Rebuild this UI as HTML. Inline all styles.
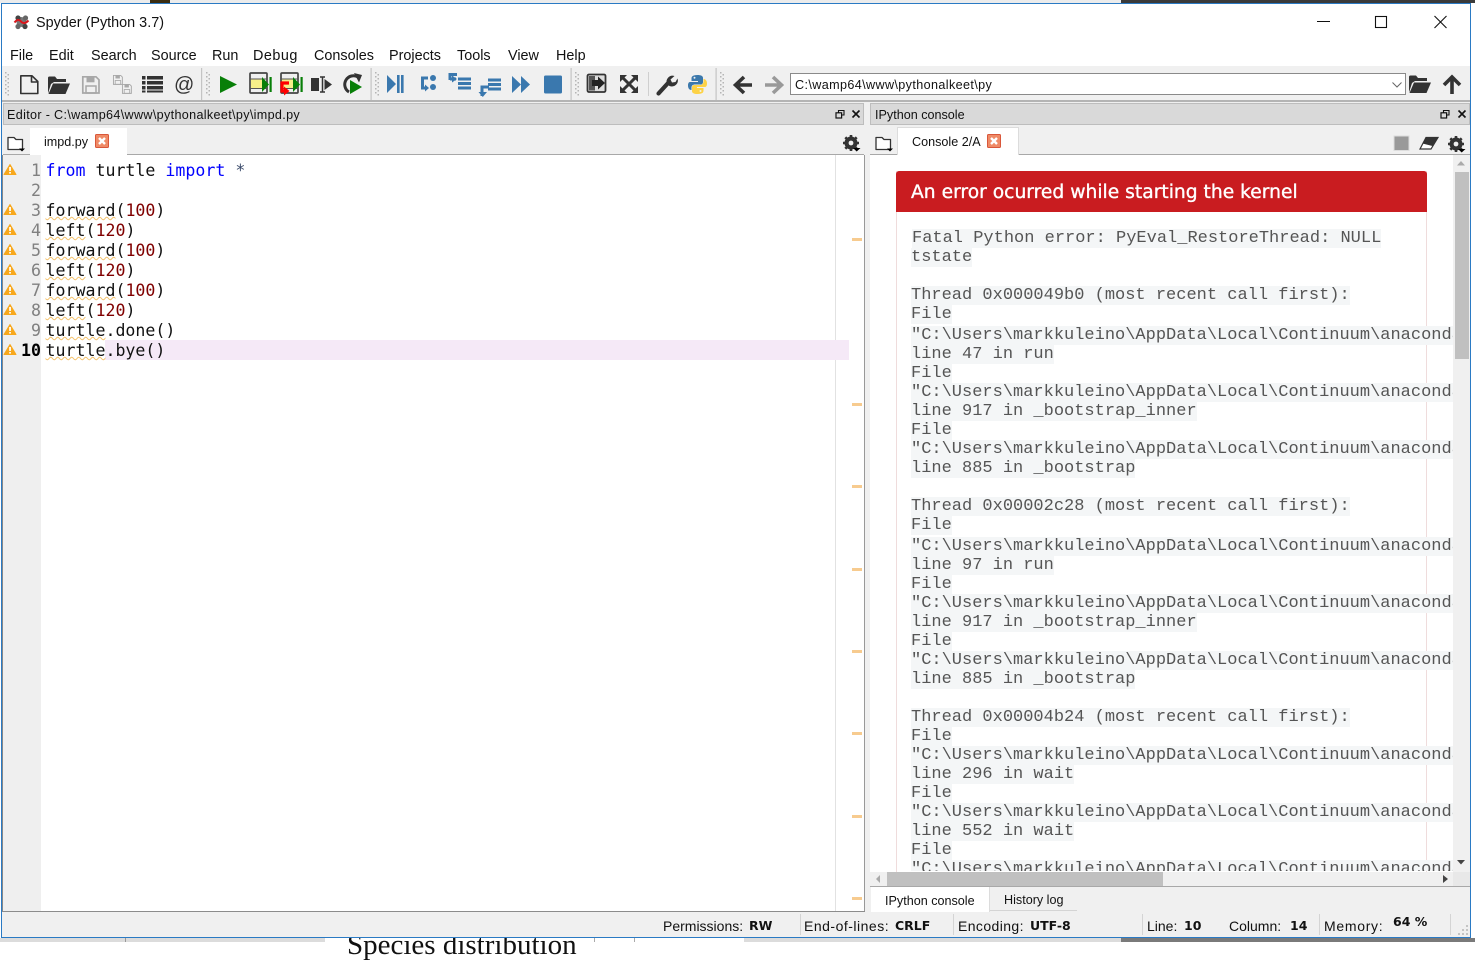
<!DOCTYPE html>
<html><head><meta charset="utf-8"><title>Spyder (Python 3.7)</title>
<style>
html,body{margin:0;padding:0;background:#fff}
body{width:1475px;height:942px;overflow:hidden;position:relative;font-family:"Liberation Sans",sans-serif;color:#111}
.a{position:absolute}
.t{position:absolute;white-space:pre;line-height:20px;font-size:14px}
.m{font-size:14.4px;top:46px}
.b{font-family:"DejaVu Sans",sans-serif;font-weight:bold;font-size:12.5px}
.code{position:absolute;left:45.5px;font:16.6px/20px "DejaVu Sans Mono",monospace;white-space:pre;color:#111}
.k{color:#0000ff}.n{color:#800000}
.w{text-decoration:underline wavy #f5c26b 1px;text-underline-offset:0px}
.ln{position:absolute;left:3px;width:38px;text-align:right;font:16.6px/20px "DejaVu Sans Mono",monospace;color:#808080}
.c{position:absolute;left:0;font:17px/20px "Liberation Mono",monospace;white-space:pre;color:#555}
.c span{background:#f4f6f7}
</style></head><body>

<!-- desktop behind -->
<div class="a" style="left:0;top:0;width:1475px;height:3px;background:#ececec"></div>
<div class="a" style="left:1121px;top:0;width:354px;height:3px;background:#3a3a3a"></div>
<div class="a" style="left:150px;top:0;width:20px;height:3px;background:#3a2c10"></div>
<div class="a" style="left:0;top:938px;width:1121px;height:4px;background:#dcdcdc"></div>
<div class="a" style="left:325px;top:938px;width:419px;height:4px;background:#fff"></div>
<div class="a" style="left:1121px;top:938px;width:354px;height:4px;background:#7a7a7a"></div>
<div class="t" style="left:347px;top:930px;font:29px/30px 'Liberation Serif',serif;color:#111">Species distribution</div>
<div class="a" style="left:594px;top:937px;width:41px;height:5px;border-left:1px solid #aaa;border-right:1px solid #aaa;box-sizing:border-box"></div>
<div class="a" style="left:125px;top:938px;width:1px;height:4px;background:#999"></div>

<!-- window -->
<div class="a" style="left:1px;top:3px;width:1470px;height:935px;background:#f0f0f0;border:1px solid #2a7ac4;box-sizing:border-box;overflow:hidden"></div>
<div class="a" style="left:2px;top:4px;width:1468px;height:62px;background:#fff"></div>

<div class="t" style="left:36px;top:13px;font-size:14.4px">Spyder (Python 3.7)</div>
<div class="t m" style="left:10px">File</div>
<div class="t m" style="left:49px">Edit</div>
<div class="t m" style="left:91px">Search</div>
<div class="t m" style="left:151px">Source</div>
<div class="t m" style="left:212px">Run</div>
<div class="t m" style="left:253px;letter-spacing:.5px">Debug</div>
<div class="t m" style="left:314px">Consoles</div>
<div class="t m" style="left:389px">Projects</div>
<div class="t m" style="left:457px">Tools</div>
<div class="t m" style="left:508px">View</div>
<div class="t m" style="left:556px">Help</div>

<!-- toolbar base -->
<div class="a" style="left:2px;top:100px;width:1468px;height:2px;background:#b4b4b4"></div>
<div class="a" style="left:790px;top:73px;width:616px;height:22px;background:#fff;border:1px solid #8a8a8a;box-sizing:border-box"></div>
<div class="t" style="left:795px;top:75px;font-size:12.6px;letter-spacing:.38px">C:\wamp64\www\pythonalkeet\py</div>

<!-- editor pane -->
<div class="a" style="left:3px;top:103px;width:861px;height:22px;background:#d9d9d9;border:1px solid #bdbdbd;box-sizing:border-box"></div>
<div class="t" style="left:7px;top:105px;font-size:12.6px;letter-spacing:.33px">Editor - C:\wamp64\www\pythonalkeet\py\impd.py</div>
<div class="a" style="left:3px;top:154px;width:861px;height:1px;background:#a8a8a8"></div>
<div class="a" style="left:30px;top:128px;width:97px;height:27px;background:#fff"></div>
<div class="t" style="left:44px;top:132px;font-size:12.6px">impd.py</div>

<div class="a" style="left:2px;top:155px;width:862px;height:756px;background:#fff;border-left:1px solid #888;box-sizing:border-box"></div>
<div class="a" style="left:3px;top:155px;width:38px;height:756px;background:#efefef"></div>
<div class="a" style="left:835px;top:155px;width:1px;height:756px;background:#e2e2e2"></div>
<div class="a" style="left:864px;top:155px;width:1px;height:756px;background:#999"></div>
<div class="a" style="left:105px;top:340px;width:744px;height:20px;background:#f5e9f7"></div>
<div class="a" style="left:2px;top:911px;width:863px;height:1px;background:#8c8c8c"></div>

<div class="ln" style="top:161px">1</div>
<div class="ln" style="top:181px">2</div>
<div class="ln" style="top:201px">3</div>
<div class="ln" style="top:221px">4</div>
<div class="ln" style="top:241px">5</div>
<div class="ln" style="top:261px">6</div>
<div class="ln" style="top:281px">7</div>
<div class="ln" style="top:301px">8</div>
<div class="ln" style="top:321px">9</div>
<div class="ln" style="top:341px;color:#000;font-weight:bold">10</div>

<div class="code" style="top:161px"><span class="k">from</span> turtle <span class="k">import</span> <span style="color:#3a4a6a">*</span></div>
<div class="code" style="top:201px"><span class="w">forward</span>(<span class="n">100</span>)</div>
<div class="code" style="top:221px"><span class="w">left</span>(<span class="n">120</span>)</div>
<div class="code" style="top:241px"><span class="w">forward</span>(<span class="n">100</span>)</div>
<div class="code" style="top:261px"><span class="w">left</span>(<span class="n">120</span>)</div>
<div class="code" style="top:281px"><span class="w">forward</span>(<span class="n">100</span>)</div>
<div class="code" style="top:301px"><span class="w">left</span>(<span class="n">120</span>)</div>
<div class="code" style="top:321px"><span class="w">turtle</span>.done()</div>
<div class="code" style="top:341px"><span class="w">turtle</span>.bye()</div>

<!-- console pane -->
<div class="a" style="left:870px;top:103px;width:600px;height:22px;background:#d9d9d9;border:1px solid #bdbdbd;box-sizing:border-box"></div>
<div class="t" style="left:875px;top:105px;font-size:12.6px">IPython console</div>
<div class="a" style="left:870px;top:154px;width:600px;height:1px;background:#a8a8a8"></div>
<div class="a" style="left:897px;top:127px;width:122px;height:28px;background:#fff;border:1px solid #dcdcdc;border-bottom:0;box-sizing:border-box"></div>
<div class="t" style="left:912px;top:132px;font-size:12.6px">Console 2/A</div>

<div class="a" style="left:870px;top:155px;width:600px;height:717px;background:#fff;overflow:hidden">
  <div class="a" style="left:26px;top:16px;width:531px;height:720px;border-left:1px solid #efdcdc;border-right:1px solid #efdcdc;box-sizing:border-box"></div>
  <div class="a" style="left:26px;top:16px;width:531px;height:41px;background:#c91c20;border-radius:3px 3px 0 0"></div>
  <div class="t" style="left:41px;top:27px;font:18.7px/22px 'DejaVu Sans',sans-serif;color:#fff;-webkit-text-stroke:.35px #fff">An error ocurred while starting the kernel</div>
  <div class="a" style="left:41px;top:2px;width:542px;height:714px;overflow:hidden">
    <div class="c" style="top:72px;left:1px"><span>Fatal Python error: PyEval_RestoreThread: NULL</span></div>
    <div class="c" style="top:91px"><span>tstate</span></div>
    <div class="c" style="top:129px"><span>Thread 0x000049b0 (most recent call first):</span></div>
    <div class="c" style="top:148px"><span>File</span></div>
    <div class="c" style="top:169px"><span>"C:\Users\markkuleino\AppData\Local\Continuum\anaconda3\lib</span></div>
    <div class="c" style="top:188px"><span>line 47 in run</span></div>
    <div class="c" style="top:207px"><span>File</span></div>
    <div class="c" style="top:226px"><span>"C:\Users\markkuleino\AppData\Local\Continuum\anaconda3\lib</span></div>
    <div class="c" style="top:245px"><span>line 917 in _bootstrap_inner</span></div>
    <div class="c" style="top:264px"><span>File</span></div>
    <div class="c" style="top:283px"><span>"C:\Users\markkuleino\AppData\Local\Continuum\anaconda3\lib</span></div>
    <div class="c" style="top:302px"><span>line 885 in _bootstrap</span></div>
    <div class="c" style="top:340px"><span>Thread 0x00002c28 (most recent call first):</span></div>
    <div class="c" style="top:359px"><span>File</span></div>
    <div class="c" style="top:380px"><span>"C:\Users\markkuleino\AppData\Local\Continuum\anaconda3\lib</span></div>
    <div class="c" style="top:399px"><span>line 97 in run</span></div>
    <div class="c" style="top:418px"><span>File</span></div>
    <div class="c" style="top:437px"><span>"C:\Users\markkuleino\AppData\Local\Continuum\anaconda3\lib</span></div>
    <div class="c" style="top:456px"><span>line 917 in _bootstrap_inner</span></div>
    <div class="c" style="top:475px"><span>File</span></div>
    <div class="c" style="top:494px"><span>"C:\Users\markkuleino\AppData\Local\Continuum\anaconda3\lib</span></div>
    <div class="c" style="top:513px"><span>line 885 in _bootstrap</span></div>
    <div class="c" style="top:551px"><span>Thread 0x00004b24 (most recent call first):</span></div>
    <div class="c" style="top:570px"><span>File</span></div>
    <div class="c" style="top:589px"><span>"C:\Users\markkuleino\AppData\Local\Continuum\anaconda3\lib</span></div>
    <div class="c" style="top:608px"><span>line 296 in wait</span></div>
    <div class="c" style="top:627px"><span>File</span></div>
    <div class="c" style="top:646px"><span>"C:\Users\markkuleino\AppData\Local\Continuum\anaconda3\lib</span></div>
    <div class="c" style="top:665px"><span>line 552 in wait</span></div>
    <div class="c" style="top:684px"><span>File</span></div>
    <div class="c" style="top:703px"><span>"C:\Users\markkuleino\AppData\Local\Continuum\anaconda3\lib</span></div>
  </div>
</div>

<!-- scrollbars -->
<div class="a" style="left:1453px;top:155px;width:17px;height:717px;background:#f0f0f0"></div>
<div class="a" style="left:1455px;top:172px;width:14px;height:187px;background:#c0c0c0"></div>
<div class="a" style="left:870px;top:872px;width:600px;height:15px;background:#f0f0f0"></div>
<div class="a" style="left:887px;top:872px;width:276px;height:14px;background:#c0c0c0"></div>
<div class="a" style="left:1453px;top:872px;width:17px;height:15px;background:#e8e8e8"></div>
<div class="a" style="left:870px;top:886px;width:600px;height:1px;background:#a8a8a8"></div>

<!-- bottom tabs -->
<div class="a" style="left:871px;top:887px;width:119px;height:25px;background:#fff;border-right:1px solid #dcdcdc;box-sizing:border-box"></div>
<div class="a" style="left:990px;top:910px;width:87px;height:1px;background:#d4d4d4"></div>
<div class="t" style="left:885px;top:891px;font-size:12.6px">IPython console</div>
<div class="t" style="left:1004px;top:890px;font-size:12.6px">History log</div>

<!-- status -->
<div class="t" style="left:663px;top:916px">Permissions:</div><div class="t b" style="left:749px;top:916px">RW</div>
<div class="t" style="left:804px;top:916px;letter-spacing:.5px">End-of-lines:</div><div class="t b" style="left:895px;top:916px">CRLF</div>
<div class="t" style="left:958px;top:916px;letter-spacing:.4px">Encoding:</div><div class="t b" style="left:1030px;top:916px">UTF-8</div>
<div class="t" style="left:1147px;top:916px">Line:</div><div class="t b" style="left:1184px;top:916px">10</div>
<div class="t" style="left:1229px;top:916px">Column:</div><div class="t b" style="left:1290px;top:916px">14</div>
<div class="t" style="left:1324px;top:916px;letter-spacing:.7px">Memory:</div><div class="t b" style="left:1393px;top:912px">64 %</div>

<!-- all icons -->
<svg class="a" style="left:0;top:0" width="1475" height="942" viewBox="0 0 1475 942">
<defs>
  <g id="warn"><path d="M6 0.5 L12 10.5 H0 Z" fill="#f8a81c" stroke="#f8a81c" stroke-linejoin="round"/><rect x="5.2" y="3" width="1.7" height="4" fill="#fff"/><rect x="5.2" y="8" width="1.7" height="1.6" fill="#fff"/></g>
  <g id="close"><rect x=".5" y=".5" width="13" height="13" rx="1" fill="#ef8a66" stroke="#d9573a"/><path d="M4 4 L10 10 M10 4 L4 10" stroke="#fff" stroke-width="2.4"/></g>
  <g id="tabs"><path d="M1 2.5 H7 L9 4.5 H15.5 V14.5 H1 Z" fill="#fff" stroke="#333" stroke-width="1.3" stroke-linejoin="round"/><path d="M12 13.5 H18 L15 16.5 Z" fill="#000"/></g>
  <g id="gear"><circle cx="8" cy="8" r="5" fill="none" stroke="#333" stroke-width="3"/><path d="M8 0 V16 M0 8 H16 M2.3 2.3 L13.7 13.7 M13.7 2.3 L2.3 13.7" stroke="#333" stroke-width="2.6"/><circle cx="8" cy="8" r="2.4" fill="#f0f0f0"/><path d="M10 13 H17.5 L13.7 16.5 Z" fill="#000"/></g>
  <g id="float"><path d="M3 2.5 V0.5 H8.5 V5 H6.5" fill="none" stroke="#111" stroke-width="1.1"/><rect x=".5" y="2.8" width="5.6" height="5.2" fill="none" stroke="#111" stroke-width="1.2"/></g>
  <g id="x"><path d="M0.5 0.5 L7.5 7.5 M7.5 0.5 L0.5 7.5" stroke="#111" stroke-width="1.6"/></g>
  <g id="folder"><path d="M0 17.5 V2 Q0 .5 1.5 .5 H7 L9 3 H18 V6 H6 L3 8 Z" fill="#333"/><path d="M0.5 18 L5 7.5 H22 L17.5 18 Z" fill="#333"/></g>
  <g id="grip" fill="#b5b5b5"><rect x="0" y="0" width="1.5" height="1.5"/><rect x="0" y="4" width="1.5" height="1.5"/><rect x="0" y="8" width="1.5" height="1.5"/><rect x="0" y="12" width="1.5" height="1.5"/><rect x="0" y="16" width="1.5" height="1.5"/><rect x="0" y="20" width="1.5" height="1.5"/><rect x="2.5" y="2" width="1.5" height="1.5"/><rect x="2.5" y="6" width="1.5" height="1.5"/><rect x="2.5" y="10" width="1.5" height="1.5"/><rect x="2.5" y="14" width="1.5" height="1.5"/><rect x="2.5" y="18" width="1.5" height="1.5"/><rect x="2.5" y="22" width="1.5" height="1.5"/></g>
  <g id="disk"><path d="M.8 .8 H14 L17 3.8 V17 H.8 Z" fill="none" stroke="#a8a8a8" stroke-width="1.7"/><rect x="4.5" y=".8" width="8" height="5.5" fill="#a8a8a8"/><rect x="4" y="10" width="10" height="7" fill="none" stroke="#a8a8a8" stroke-width="1.5"/></g>
</defs>

<!-- title logo -->
<circle cx="21.5" cy="22" r="5" fill="#777"/>
<circle cx="18" cy="18" r="2.6" fill="#444"/><circle cx="25.5" cy="18" r="2.6" fill="#666"/><circle cx="18" cy="26.5" r="2.6" fill="#666"/><circle cx="25" cy="26.5" r="2.6" fill="#444"/>
<path d="M14.5 22.5 Q18 18 21 21.5 T28.5 20.5" fill="none" stroke="#d8151b" stroke-width="2"/>

<!-- window controls -->
<rect x="1317" y="21" width="13" height="1" fill="#111"/>
<rect x="1375.5" y="16.5" width="11" height="11" fill="none" stroke="#111" stroke-width="1.1"/>
<path d="M1434.5 16 L1446.5 28 M1446.5 16 L1434.5 28" stroke="#111" stroke-width="1.1"/>

<!-- toolbar separators + grips -->
<rect x="201" y="68" width="1.2" height="32" fill="#c4c4c4"/><rect x="370.5" y="68" width="1.2" height="32" fill="#c4c4c4"/><rect x="570.5" y="68" width="1.2" height="32" fill="#c4c4c4"/><rect x="648" y="72" width="1" height="24" fill="#cfcfcf"/><rect x="715.5" y="68" width="1.2" height="32" fill="#c4c4c4"/>
<use href="#grip" x="5" y="72"/><use href="#grip" x="206" y="72"/><use href="#grip" x="375" y="72"/><use href="#grip" x="575" y="72"/><use href="#grip" x="720" y="72"/>

<!-- file group -->
<path d="M20.8 75.8 H32 L37.8 81.5 V93.5 H20.8 Z M31.5 76 V82 H37.5" fill="none" stroke="#333" stroke-width="1.6" stroke-linejoin="round"/>
<use href="#folder" x="48" y="76"/>
<use href="#disk" x="82" y="76"/>
<g transform="translate(113 75) scale(.55)"><use href="#disk"/></g>
<g transform="translate(122 84) scale(.55)"><use href="#disk"/></g>
<g fill="#333"><rect x="142" y="76" width="3.5" height="3.5"/><rect x="147" y="76" width="16" height="3.5"/><rect x="142" y="81" width="3.5" height="3.5"/><rect x="147" y="81" width="16" height="3.5"/><rect x="142" y="86" width="3.5" height="3.5"/><rect x="147" y="86" width="16" height="3.5"/><rect x="142" y="90.5" width="3.5" height="2"/><rect x="147" y="90.5" width="16" height="2"/></g>
<text x="174" y="91" font-family="Liberation Sans, sans-serif" font-size="20" fill="#333">@</text>

<!-- run group -->
<path d="M220 76 L237 84.5 L220 93 Z" fill="#087f08"/>
<rect x="250" y="73" width="17" height="20" rx="1" fill="none" stroke="#444" stroke-width="1.7"/>
<rect x="251" y="79.5" width="13" height="9" fill="#f7ef8a"/><path d="M250 79 H267 M250 88.5 H267" stroke="#555"/>
<path d="M262 77 L269 84.5 L262 92 Z" fill="#087f08"/><rect x="269.5" y="77" width="2.2" height="15" fill="#087f08"/>
<rect x="281" y="73" width="17" height="20" rx="1" fill="none" stroke="#444" stroke-width="1.7"/>
<rect x="282" y="79.5" width="13" height="9" fill="#f7ef8a"/><path d="M281 79 H298 M281 88.5 H298" stroke="#555"/>
<path d="M293 77 L300 84.5 L293 92 Z" fill="#087f08"/><rect x="300.5" y="77" width="2.2" height="15" fill="#087f08"/>
<path d="M289 83 H282 V91 H285" fill="none" stroke="#f00" stroke-width="3.2"/><path d="M284 86.5 L289.5 91 L284 95.5 Z" fill="#f00"/>
<rect x="311" y="78" width="8" height="13" fill="#333"/><path d="M320 77 H325 M322.5 77 V92 M320 92 H325" stroke="#333" stroke-width="1.5" fill="none"/><path d="M324.5 79 L332 84.5 L324.5 90 Z" fill="#333"/>
<path d="M349 92 A8 8 0 1 1 358 77" fill="none" stroke="#333" stroke-width="3"/><path d="M354 73 L362 75 L359 82.5 Z" fill="#333"/><path d="M350 80 L362 87 L350 94 Z" fill="#087f08"/>

<!-- debug group -->
<path d="M387 75 L396 84 L387 93 Z" fill="#3a78ae"/><rect x="397" y="75" width="2.6" height="18" fill="#3a78ae"/><rect x="401" y="75" width="2.6" height="18" fill="#3a78ae"/>
<g fill="none" stroke="#3a78ae" stroke-width="3"><path d="M428 78 H422.5 V88 H426"/><path d="M450 80 V74.5 H457 M450 79 H456"/><path d="M458 79 H471 M458 83.5 H471 M458 88 H471"/><path d="M482 96 V87 H489"/><path d="M488 80 H501 M488 84.5 H501 M488 89 H501"/></g>
<g fill="#3a78ae"><circle cx="433" cy="78" r="3"/><circle cx="433" cy="87" r="3"/><path d="M425 84.5 L429 88 L425 91.5 Z"/><path d="M452 75.5 L457 79 L452 82.5 Z"/><path d="M478.5 92 H487 L482.8 97 Z"/><path d="M512 76 L521 84.5 L512 93 Z"/><path d="M521 76 L530 84.5 L521 93 Z"/><rect x="544" y="75.5" width="18" height="18" rx="1.5"/></g>

<!-- misc group -->
<rect x="587.5" y="74.5" width="18" height="17.5" rx="1.5" fill="#ddd" stroke="#333" stroke-width="1.8"/><rect x="589" y="76" width="6" height="14.5" fill="#555"/>
<path d="M592 80 H598 V76.5 L605 83 L598 89.5 V86 H592 Z" fill="#222"/>
<g fill="none" stroke="#333" stroke-width="3"><path d="M622 77 L636 91 M636 77 L622 91"/></g>
<g fill="#333"><path d="M620 75 H627 L620 82 Z"/><path d="M638 75 H631 L638 82 Z"/><path d="M620 93 H627 L620 86 Z"/><path d="M638 93 H631 L638 86 Z"/></g>
<path d="M658.5 93.5 L669 82" stroke="#333" stroke-width="4.2" stroke-linecap="round"/>
<path d="M667 84 A6 6 0 0 1 674.5 76 L670.5 79.5 L672 82.5 L675.5 82 L677.5 78.5 A6 6 0 0 1 669.5 86 Z" fill="#333"/>
<path d="M697.5 75 C692 75 691.5 77 691.5 78.5 V81 H698 V82 H690 C688 82 688 85 688 85.5 C688 89 690 90 691.5 90 V87.5 C691.5 85.5 693 84.5 695 84.5 H700.5 C702 84.5 703 83.5 703 82 V78 C703 76 701 75 697.5 75 Z" fill="#3b78ab"/>
<circle cx="694.5" cy="77.8" r="1" fill="#f0f0f0"/>
<path d="M697.5 94 C703 94 703.5 92 703.5 90.5 V88 H697 V87 H705 C707 87 707 84 707 83.5 C707 80 705 79 703.5 79 V81.5 C703.5 83.5 702 85 700 85 H694.5 C693 85 692 86 692 87.5 V91 C692 93 694 94 697.5 94 Z" fill="#fdd245"/>
<circle cx="700.5" cy="91" r="1" fill="#f0f0f0"/>

<!-- nav -->
<path d="M744 77 L735.5 85 L744 93 M736.5 85 H752" fill="none" stroke="#333" stroke-width="3.6"/>
<path d="M773 77 L781.5 85 L773 93 M780.5 85 H765" fill="none" stroke="#999" stroke-width="3.6"/>
<path d="M1392.5 82.5 L1397 87 L1401.5 82.5" fill="none" stroke="#666" stroke-width="1"/>
<use href="#folder" x="1409" y="75"/>
<path d="M1444 85 L1452 77 L1460 85 M1452 78 V94" fill="none" stroke="#333" stroke-width="3.6"/>

<!-- dock controls -->
<use href="#float" x="835.5" y="110"/><use href="#x" x="852" y="110"/>
<use href="#float" x="1440.5" y="110"/><use href="#x" x="1458" y="110"/>

<!-- tab row icons -->
<use href="#tabs" x="7" y="135"/><use href="#close" x="95" y="134"/><use href="#gear" x="843" y="135"/>
<use href="#tabs" x="875" y="135"/><use href="#close" x="987" y="134"/>
<rect x="1394" y="136" width="15" height="14.5" fill="#999" stroke="#ddd"/>
<path d="M1426 137.5 H1438 L1431 149 H1420 Z" fill="#fff" stroke="#333" stroke-width="1.2"/><path d="M1426 137.5 H1438 L1432.5 146 L1422.5 143.5 Z" fill="#333"/>
<use href="#gear" x="1448" y="136"/>

<!-- warnings -->
<use href="#warn" x="4" y="164"/><use href="#warn" x="4" y="204"/><use href="#warn" x="4" y="224"/><use href="#warn" x="4" y="244"/><use href="#warn" x="4" y="264"/><use href="#warn" x="4" y="284"/><use href="#warn" x="4" y="304"/><use href="#warn" x="4" y="324"/><use href="#warn" x="4" y="344"/>

<!-- flags -->
<g fill="#f7cb8f"><rect x="852" y="238" width="10" height="3"/><rect x="852" y="403" width="10" height="3"/><rect x="852" y="485" width="10" height="3"/><rect x="852" y="568" width="10" height="3"/><rect x="852" y="650" width="10" height="3"/><rect x="852" y="732" width="10" height="3"/><rect x="852" y="815" width="10" height="3"/><rect x="852" y="897" width="10" height="3"/></g>

<!-- scroll arrows -->
<path d="M1457 165.5 H1465 L1461 161 Z" fill="#aaa"/>
<path d="M1457 860 H1465 L1461 864.5 Z" fill="#444"/>
<path d="M880 875 V883 L876 879 Z" fill="#aaa"/>
<path d="M1443 875 V883 L1448 879 Z" fill="#444"/>

<!-- status separators + size grip -->
<g fill="#d4d4d4"><rect x="800" y="914" width="1" height="21"/><rect x="953" y="914" width="1" height="21"/><rect x="1142" y="914" width="1" height="21"/><rect x="1319" y="914" width="1" height="21"/><rect x="1450" y="914" width="1" height="21"/></g>
<g fill="#c4c4c4"><rect x="1466" y="925" width="2" height="2"/><rect x="1462" y="929" width="2" height="2"/><rect x="1466" y="929" width="2" height="2"/><rect x="1458" y="933" width="2" height="2"/><rect x="1462" y="933" width="2" height="2"/><rect x="1466" y="933" width="2" height="2"/></g>
</svg>
</body></html>
